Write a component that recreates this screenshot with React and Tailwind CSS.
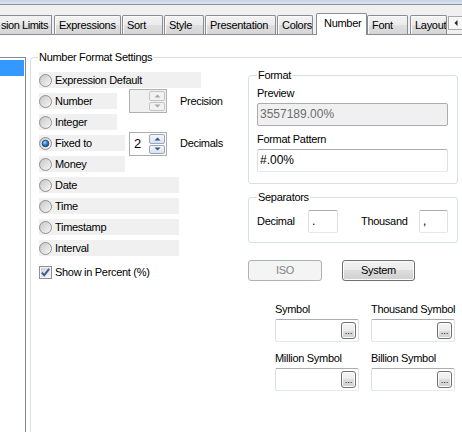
import React from 'react';

function Radio({ checked }) {
  return (
    <svg width="13" height="13" viewBox="0 0 13 13" className="shrink-0">
      <defs>
        <linearGradient id="rOuter" x1="0" y1="0" x2="1" y2="1">
          <stop offset="0" stopColor="#c4c4c4" />
          <stop offset="1" stopColor="#fbfbfb" />
        </linearGradient>
        <linearGradient id="rInner" x1="0" y1="0" x2="1" y2="1">
          <stop offset="0" stopColor="#cdcdcd" />
          <stop offset="1" stopColor="#f1f1f1" />
        </linearGradient>
        <radialGradient id="rDot" cx="0.4" cy="0.35" r="0.75">
          <stop offset="0" stopColor="#a6dbff" />
          <stop offset="0.45" stopColor="#2f86d8" />
          <stop offset="1" stopColor="#0d2c6a" />
        </radialGradient>
      </defs>
      <circle cx="6.5" cy="6.5" r="6" fill="url(#rOuter)" stroke="#8f9092" />
      <circle cx="6.5" cy="6.5" r="4.2" fill="url(#rInner)" />
      {checked && (
        <circle cx="6.5" cy="6.5" r="3.3" fill="url(#rDot)" stroke="#1d3f75" strokeWidth="0.8" />
      )}
    </svg>
  );
}

function Check() {
  return (
    <svg width="13" height="13" viewBox="0 0 13 13" className="shrink-0">
      <defs>
        <linearGradient id="cIn" x1="0" y1="0" x2="1" y2="1">
          <stop offset="0" stopColor="#cbcfd5" />
          <stop offset="1" stopColor="#f7f7f7" />
        </linearGradient>
      </defs>
      <rect x="0.5" y="0.5" width="12" height="12" fill="#f4f4f4" stroke="#8e8f8f" />
      <rect x="2" y="2" width="9" height="9" fill="url(#cIn)" />
      <path d="M2.8 6.6 L5.2 9.2 L10.2 2.9" fill="none" stroke="#3d5a98" strokeWidth="1.9" />
    </svg>
  );
}

function Option({ label, w, checked }) {
  return (
    <div className={`flex items-center h-[16px] bg-[#f0f0f0] gap-[3px] shrink-0 ${w}`}>
      <Radio checked={checked} />
      <span>{label}</span>
    </div>
  );
}

function Arrow({ up, disabled }) {
  return (
    <svg width="7" height="4" viewBox="0 0 7 4">
      <path d={up ? 'M0.5 3.5 L6.5 3.5 L3.5 0.5 Z' : 'M0.5 0.5 L6.5 0.5 L3.5 3.5 Z'} fill={disabled ? '#a7a7a7' : '#35508c'} />
    </svg>
  );
}

function SpinBtn({ up, disabled }) {
  return (
    <div
      className={`flex-1 flex items-center justify-center border rounded-[2px] ${
        disabled
          ? 'border-[#c4c4c4] bg-[#f2f2f2]'
          : 'border-[#9aa7b8] bg-gradient-to-b from-[#f4f7fb] to-[#d9e3ef]'
      }`}
    >
      <Arrow up={up} disabled={disabled} />
    </div>
  );
}

function Spinner({ value, disabled }) {
  return (
    <div
      className={`w-[38px] h-[24px] border flex items-stretch justify-between p-[1px] ${
        disabled ? 'bg-[#f0f0f0] border-[#adb2b5]' : 'bg-white border-[#abadb3]'
      }`}
    >
      <span className="pl-[3px] text-[13px] tracking-normal leading-[20px]">{value}</span>
      <div className="flex flex-col gap-[1px] w-[16px]">
        <SpinBtn up disabled={disabled} />
        <SpinBtn disabled={disabled} />
      </div>
    </div>
  );
}

function Group({ title, className, children }) {
  return (
    <div className={`border border-[#d5dfe5] rounded-[3px] ${className}`}>
      <div className="-mt-[7px] ml-[8px] w-fit px-[1px] bg-white leading-[13px]">{title}</div>
      {children}
    </div>
  );
}

function TextBox({ className, children }) {
  return (
    <div
      className={`border border-[#e3e9ef] border-t-[#abadb3] border-l-[#dbdfe6] border-r-[#dbdfe6] rounded-[2px] bg-white text-[12px] tracking-normal flex items-center ${className}`}
    >
      {children}
    </div>
  );
}

function SymbolField({ label, top }) {
  return (
    <div className={`flex flex-col ${top}`}>
      <div className="leading-[13px] whitespace-nowrap">{label}</div>
      <TextBox className="mt-[3px] h-[23px] w-[84px] justify-end pr-[2px]">
        <div className="w-[15px] h-[17px] rounded-[3px] border border-[#707070] bg-[linear-gradient(#f4f4f4_0%,#ececec_50%,#dedede_50%,#d0d0d0_100%)] shadow-[inset_0_0_0_1px_#fcfcfc] flex items-end justify-center text-[9px] leading-[10px] pb-[2px] tracking-normal">
          ...
        </div>
      </TextBox>
    </div>
  );
}

const tabInactive =
  'h-[19px] border border-b-0 border-[#898c95] rounded-t-[2px] bg-[linear-gradient(#f3f3f3_0%,#ebebeb_50%,#dfdfdf_50%,#d6d6d6_100%)] shadow-[inset_1px_1px_0_#fbfbfb] flex items-center pl-[4px] whitespace-nowrap overflow-hidden shrink-0';

export default function App() {
  return (
    <div className="w-[462px] h-[432px] overflow-hidden bg-white flex flex-col text-[11px] tracking-[-0.3px] leading-[13px] text-black font-['Liberation_Sans',Arial,sans-serif]">
      {/* window top strip */}
      <div className="h-[5px] shrink-0 bg-gradient-to-b from-[#c6d4e5] to-[#dbe5f0] border-b border-[#8d9196]" />

      {/* tab strip */}
      <div className="h-[30px] shrink-0 bg-[#f0f0f0] border-b border-[#898c95] flex items-end">
        <div className="h-[19px] w-[52px] border-r border-t border-[#898c95] bg-[linear-gradient(#f3f3f3_0%,#ebebeb_50%,#dfdfdf_50%,#d6d6d6_100%)] flex items-center pl-[1px] tracking-[-0.45px] whitespace-nowrap shrink-0">
          sion Limits
        </div>
        <div className={`${tabInactive} ml-[2px] w-[67px]`}>Expressions</div>
        <div className={`${tabInactive} ml-[1px] w-[41px]`}>Sort</div>
        <div className={`${tabInactive} ml-[1px] w-[40px]`}>Style</div>
        <div className={`${tabInactive} ml-[1px] w-[71px]`}>Presentation</div>
        <div className={`${tabInactive} ml-[1px] w-[36px]`}>Colors</div>
        <div className="ml-[3px] w-[51px] h-[22px] -mb-px relative z-10 bg-white border border-b-0 border-[#898c95] rounded-t-[2px] flex items-center pl-[7px] pb-[2px] shrink-0">
          Number
        </div>
        <div className={`${tabInactive} w-[41px]`}>Font</div>
        <div className={`${tabInactive} ml-[2px] w-[37px]`}>Layout</div>
        <div className="ml-[1px] mb-[4px] w-[16px] h-[14px] border border-[#a9a9a9] bg-[#f7f7f7] flex items-center pl-[5px] shrink-0">
          <svg width="4" height="6" viewBox="0 0 4 6">
            <path d="M3.5 0 L3.5 6 L0.5 3 Z" fill="#222" />
          </svg>
        </div>
      </div>

      {/* body */}
      <div className="flex flex-1 pt-[22px]">
        {/* list box */}
        <div className="w-[26px] shrink-0 border-t border-r border-[#828790] pt-[2px]">
          <div className="w-[24px] h-[16px] bg-[#3399ff]" />
        </div>

        {/* main group */}
        <div className="ml-[4px] flex-1 border-t border-l border-[#d5dfe5] rounded-tl-[4px]">
          <div className="-mt-[7px] ml-[7px] w-fit px-[1px] bg-white leading-[13px]">Number Format Settings</div>
          <div className="flex">
            {/* left column */}
            <div className="w-[217px] pl-[8px] mt-[8px] flex flex-col gap-[5px] shrink-0">
              <Option w="w-[162px]" label="Expression Default" />
              <div className="flex items-center h-[16px]">
                <Option w="w-[78px]" label="Number" />
                <div className="ml-[12px]">
                  <Spinner value="" disabled />
                </div>
                <span className="ml-[13px]">Precision</span>
              </div>
              <Option w="w-[78px]" label="Integer" />
              <div className="flex items-center h-[16px]">
                <Option w="w-[86px]" label="Fixed to" checked />
                <div className="ml-[4px] mt-[2px]">
                  <Spinner value="2" />
                </div>
                <span className="ml-[13px]">Decimals</span>
              </div>
              <Option w="w-[86px]" label="Money" />
              <Option w="w-[140px]" label="Date" />
              <Option w="w-[140px]" label="Time" />
              <Option w="w-[140px]" label="Timestamp" />
              <Option w="w-[140px]" label="Interval" />
              <div className="mt-[4px] flex items-center gap-[3px] h-[14px]">
                <Check />
                <span>Show in Percent (%)</span>
              </div>
            </div>

            {/* right column */}
            <div className="w-[210px] mt-[11px] flex flex-col shrink-0">
              <Group title="Format" className="h-[109px]">
                <div className="px-[8px] flex flex-col">
                  <div className="mt-[5px]">Preview</div>
                  <div className="mt-[3px] h-[23px] w-[191px] border border-[#a9adb1] rounded-[2px] bg-[#f0f0f0] text-[12px] tracking-normal text-[#6d6d6d] flex items-center pl-[2px]">
                    3557189.00%
                  </div>
                  <div className="mt-[7px]">Format Pattern</div>
                  <TextBox className="mt-[3px] h-[23px] w-[191px] pl-[2px]">#.00%</TextBox>
                </div>
              </Group>

              <Group title="Separators" className="mt-[13px] h-[46px]">
                <div className="flex items-center px-[8px] mt-[6px]">
                  <span className="w-[51px] shrink-0">Decimal</span>
                  <TextBox className="h-[23px] w-[30px] pl-[3px]">.</TextBox>
                  <span className="ml-[23px] w-[58px] shrink-0">Thousand</span>
                  <TextBox className="h-[23px] w-[29px] pl-[3px]">,</TextBox>
                </div>
              </Group>

              <div className="flex mt-[17px]">
                <div className="w-[74px] h-[21px] border border-[#adb2b5] rounded-[3px] bg-[#f4f4f4] text-[#838383] flex items-center justify-center">
                  ISO
                </div>
                <div className="ml-[20px] w-[73px] h-[21px] border border-[#707070] rounded-[3px] bg-[linear-gradient(#f2f2f2_0%,#ebebeb_50%,#dddddd_50%,#cfcfcf_100%)] shadow-[inset_0_0_0_1px_#fcfcfc] flex items-center justify-center">
                  System
                </div>
              </div>

              <div className="ml-[27px] mt-[22px] grid grid-cols-[84px_84px] gap-x-[12px]">
                <SymbolField label="Symbol" top="" />
                <SymbolField label="Thousand Symbol" top="" />
                <SymbolField label="Million Symbol" top="mt-[10px]" />
                <SymbolField label="Billion Symbol" top="mt-[10px]" />
              </div>
            </div>
          </div>
        </div>
      </div>
    </div>
  );
}
